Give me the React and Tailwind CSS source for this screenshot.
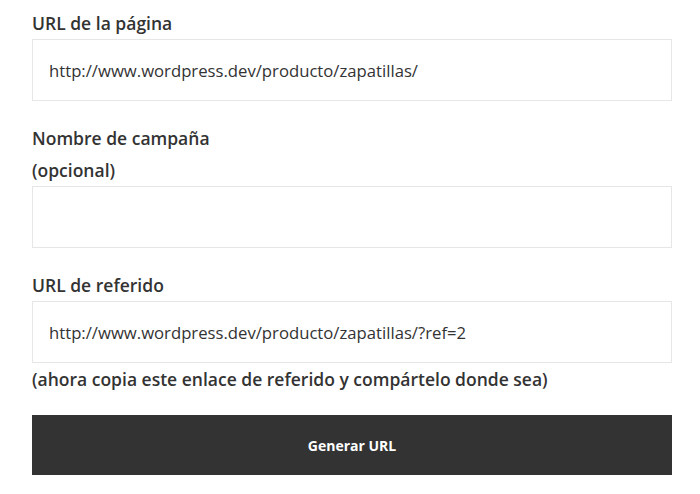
import { useState } from 'react';

const FONT = "font-['Open_Sans','Lato',sans-serif]";

function Field({ label, value, children }) {
  return (
    <div className="mb-[21px]">
      <label className="block text-[17.5px] leading-[32px] font-semibold text-[#333]">{label}</label>
      <input
        type="text"
        defaultValue={value}
        className="block w-full h-[62px] px-4 border border-[#e6e6e6] bg-white text-[16.7px] text-[#333] outline-none"
      />
      {children}
    </div>
  );
}

export default function App() {
  const [url] = useState('http://www.wordpress.dev/producto/zapatillas/');

  return (
    <div className={`${FONT} bg-white min-h-[494px] pl-8 pr-7 pt-[7px]`}>
      <Field label="URL de la página" value={url} />
      <Field
        label={
          <>
            Nombre de campaña
            <br />
            (opcional)
          </>
        }
        value=""
      />
      <div className="mb-5">
        <label className="block text-[17.5px] leading-[32px] font-semibold text-[#333]">URL de referido</label>
        <input
          type="text"
          defaultValue={url + '?ref=2'}
          className="block w-full h-[62px] px-4 border border-[#e6e6e6] bg-white text-[16.7px] text-[#333] outline-none"
        />
        <p className="text-[17.5px] leading-[32px] font-semibold text-[#333]">
          (ahora copia este enlace de referido y compártelo donde sea)
        </p>
      </div>
      <button className="block w-full h-[60px] bg-[#333] text-white text-[14px] font-bold">
        Generar URL
      </button>
    </div>
  );
}
